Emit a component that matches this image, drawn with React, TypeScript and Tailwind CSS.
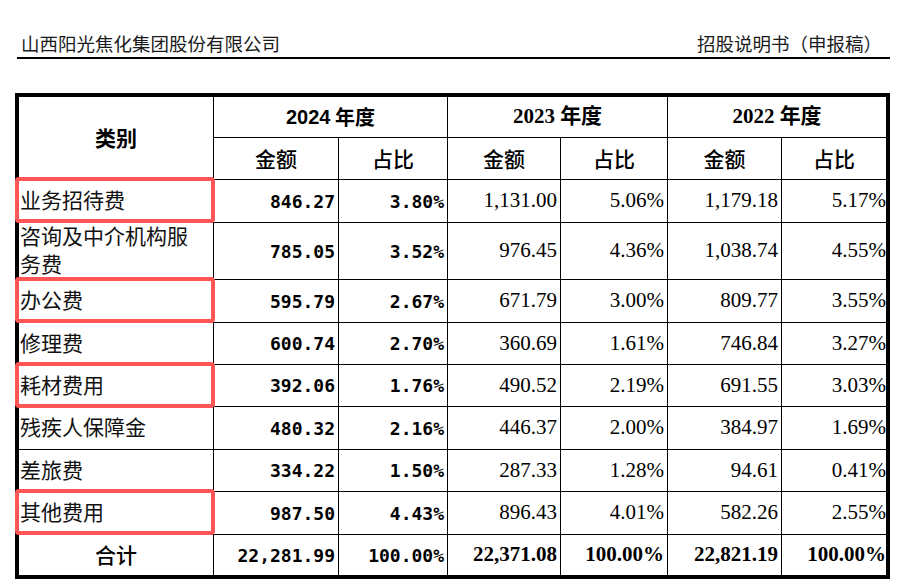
const SONG = "font-['Liberation_Serif','Noto_Sans_CJK_SC',serif]";
const HEI = "font-['Noto_Sans_CJK_SC',sans-serif]";

type Row = {
  name: string;
  a24: string;
  p24: string;
  a23: string;
  p23: string;
  a22: string;
  p22: string;
  marked?: boolean;
  height: string;
};

const ROWS: Row[] = [
  { name: "业务招待费", a24: "846.27", p24: "3.80%", a23: "1,131.00", p23: "5.06%", a22: "1,179.18", p22: "5.17%", marked: true, height: "h-[43px]" },
  { name: "咨询及中介机构服务费", a24: "785.05", p24: "3.52%", a23: "976.45", p23: "4.36%", a22: "1,038.74", p22: "4.55%", height: "h-[57px]" },
  { name: "办公费", a24: "595.79", p24: "2.67%", a23: "671.79", p23: "3.00%", a22: "809.77", p22: "3.55%", marked: true, height: "h-[43px]" },
  { name: "修理费", a24: "600.74", p24: "2.70%", a23: "360.69", p23: "1.61%", a22: "746.84", p22: "3.27%", height: "h-[42px]" },
  { name: "耗材费用", a24: "392.06", p24: "1.76%", a23: "490.52", p23: "2.19%", a22: "691.55", p22: "3.03%", marked: true, height: "h-[42px]" },
  { name: "残疾人保障金", a24: "480.32", p24: "2.16%", a23: "446.37", p23: "2.00%", a22: "384.97", p22: "1.69%", height: "h-[43px]" },
  { name: "差旅费", a24: "334.22", p24: "1.50%", a23: "287.33", p23: "1.28%", a22: "94.61", p22: "0.41%", height: "h-[42px]" },
  { name: "其他费用", a24: "987.50", p24: "4.43%", a23: "896.43", p23: "4.01%", a22: "582.26", p22: "2.55%", marked: true, height: "h-[43px]" },
];

function Mono({ children }: { children: string }) {
  return (
    <div className="flex items-center justify-end border-r border-b border-black pr-[3px] font-['DejaVu_Sans_Mono',monospace] text-[18px] font-bold text-black">
      {children}
    </div>
  );
}

function Times({ children, last, bold }: { children: string; last?: boolean; bold?: boolean }) {
  return (
    <div
      className={`flex items-center justify-end border-b border-black font-['Liberation_Serif',serif] text-[21px] text-black ${
        last ? "pr-0" : "border-r pr-[3px]"
      } ${bold ? "font-bold" : "font-normal"}`}
    >
      {children}
    </div>
  );
}

export default function App() {
  return (
    <div className="h-[585px] w-[905px] overflow-hidden bg-white">
      {/* page header */}
      <div className="ml-[17px] flex w-[873px] items-end justify-between border-b-2 border-black pt-[35px] pb-[2px] leading-[20px]">
        <span className={`${SONG} pl-[4px] text-[18.5px] text-[#1a1a1a]`}>山西阳光焦化集团股份有限公司</span>
        <span className={`${SONG} pr-[8px] text-[18.5px] text-[#1a1a1a]`}>招股说明书（申报稿）</span>
      </div>

      <div className="mt-[34px] ml-[15px] w-[875px] border-4 border-black">
        <div className="grid grid-cols-[195px_125px_109px_113px_107px_114px_104px] grid-rows-[41px_42px]">
          <div className={`${HEI} row-span-2 flex items-center justify-center border-r border-b border-black text-[21px] font-bold`}>
            类别
          </div>
          <div className={`${HEI} col-span-2 flex items-center justify-center border-r border-b border-black text-[20px] font-bold`}>
            <span className="font-['Liberation_Sans',sans-serif]">2024</span>&nbsp;年度
          </div>
          <div className={`${SONG} col-span-2 flex items-center justify-center border-r border-b border-black text-[21px] font-bold`}>
            2023 年度
          </div>
          <div className={`${SONG} col-span-2 flex items-center justify-center border-b border-black text-[21px] font-bold`}>
            2022 年度
          </div>
          {["金额", "占比", "金额", "占比", "金额", "占比"].map((h, i) => (
            <div
              key={i}
              className={`${HEI} flex items-center justify-center border-b border-black text-[21px] font-medium ${
                i === 5 ? "" : "border-r"
              }`}
            >
              {h}
            </div>
          ))}
        </div>

        {ROWS.map((r) => (
          <div key={r.name} className={`grid grid-cols-[195px_125px_109px_113px_107px_114px_104px] ${r.height}`}>
            <div className={`${SONG} relative flex items-center border-r border-b border-black pr-2 pl-[1px] text-[21px] leading-[28px] text-[#111]`}>
              {r.name}
              {/* red highlight frame */}
              {r.marked && (
                <div className="absolute top-[-3px] left-[-4px] h-[46px] w-[200px] rounded-[4px] border-4 border-[#ff5555]" />
              )}
            </div>
            <Mono>{r.a24}</Mono>
            <Mono>{r.p24}</Mono>
            <Times>{r.a23}</Times>
            <Times>{r.p23}</Times>
            <Times>{r.a22}</Times>
            <Times last>{r.p22}</Times>
          </div>
        ))}

        <div className="grid h-[40px] grid-cols-[195px_125px_109px_113px_107px_114px_104px]">
          <div className={`${HEI} flex items-center justify-center border-r border-black text-[21px] font-medium`}>合计</div>
          <div className="flex items-center justify-end border-r border-black pr-[3px] font-['DejaVu_Sans_Mono',monospace] text-[18px] font-bold">
            22,281.99
          </div>
          <div className="flex items-center justify-end border-r border-black pr-[3px] font-['DejaVu_Sans_Mono',monospace] text-[18px] font-bold">
            100.00%
          </div>
          <div className="flex items-center justify-end border-r border-black pr-[3px] font-['Liberation_Serif',serif] text-[21px] font-bold">
            22,371.08
          </div>
          <div className="flex items-center justify-end border-r border-black pr-[3px] font-['Liberation_Serif',serif] text-[21px] font-bold">
            100.00%
          </div>
          <div className="flex items-center justify-end border-r border-black pr-[3px] font-['Liberation_Serif',serif] text-[21px] font-bold">
            22,821.19
          </div>
          <div className="flex items-center justify-end font-['Liberation_Serif',serif] text-[21px] font-bold">100.00%</div>
        </div>
      </div>
    </div>
  );
}
